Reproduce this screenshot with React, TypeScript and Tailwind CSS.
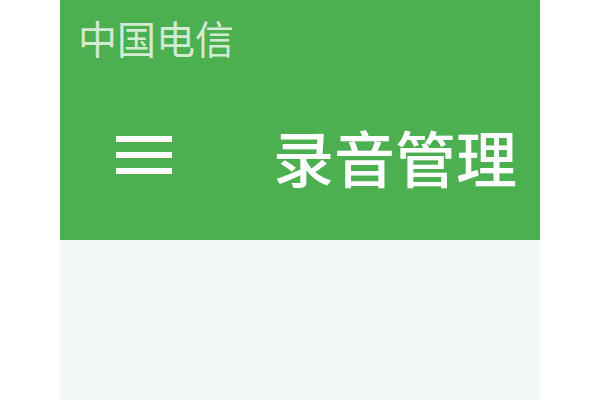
export default function App() {
  return (
    <div className="w-full min-h-screen bg-white">
      <div className="mx-auto w-[480px] h-[400px] bg-[#f4f7f8] flex flex-col">
        <div className="h-[240px] bg-[#4caf50] flex flex-col" style={{ fontFamily: '"Noto Sans CJK SC", sans-serif' }}>
          <div className="pl-[18px] pt-[18px] text-[39px] leading-none text-white/75">中国电信</div>
          <div className="flex items-start mt-[69px]">
            <div className="ml-[56px] mt-[10px] flex flex-col gap-[10px]">
              <div className="w-[56px] h-[6px] bg-white" />
              <div className="w-[56px] h-[6px] bg-white" />
              <div className="w-[56px] h-[6px] bg-white" />
            </div>
            <div className="ml-[101px] text-[61px] leading-none text-white font-medium">录音管理</div>
          </div>
        </div>
      </div>
    </div>
  );
}
